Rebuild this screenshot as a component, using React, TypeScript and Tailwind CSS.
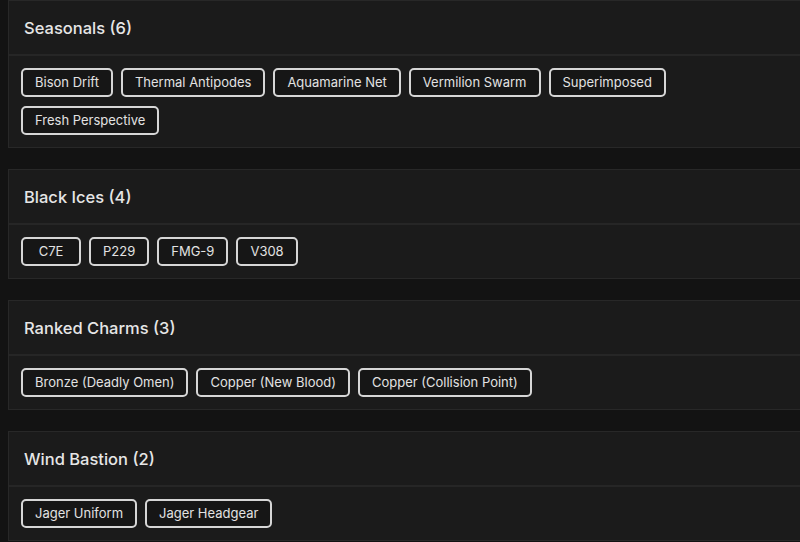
const groups = [
  {
    title: 'Seasonals',
    items: ['Bison Drift', 'Thermal Antipodes', 'Aquamarine Net', 'Vermilion Swarm', 'Superimposed', 'Fresh Perspective'],
  },
  { title: 'Black Ices', items: ['C7E', 'P229', 'FMG-9', 'V308'] },
  { title: 'Ranked Charms', items: ['Bronze (Deadly Omen)', 'Copper (New Blood)', 'Copper (Collision Point)'] },
  { title: 'Wind Bastion', items: ['Jager Uniform', 'Jager Headgear'] },
];

function Chip({ label }: { label: string }) {
  return (
    <span className="h-[29px] min-w-[60px] px-[12px] flex items-center justify-center rounded-[5px] border-2 border-[#d6d6d6] bg-[#161616] text-[13px] text-[#e2e2e2] leading-none">
      {label}
    </span>
  );
}

export default function App() {
  return (
    <div
      className="w-[800px] h-[542px] overflow-hidden bg-[#131313] pl-2"
      style={{ fontFamily: 'Inter, "Open Sans", sans-serif' }}
    >
      <div className="w-[820px] flex flex-col gap-[21px]">
        {groups.map((g) => (
          <div key={g.title} className="bg-[#1b1b1b] border border-[#282828]">
            <div className="h-[55px] flex items-center pl-[15px] pt-[2px] border-b-2 border-[#262626]">
              <h3 className="text-[16.5px] font-medium text-[#e6e6e6]">
                {g.title} ({g.items.length})
              </h3>
            </div>
            <div className="flex flex-wrap gap-x-[8px] gap-y-[9px] px-3 py-3 pr-[150px]">
              {g.items.map((it) => (
                <Chip key={it} label={it} />
              ))}
            </div>
          </div>
        ))}
      </div>
    </div>
  );
}
